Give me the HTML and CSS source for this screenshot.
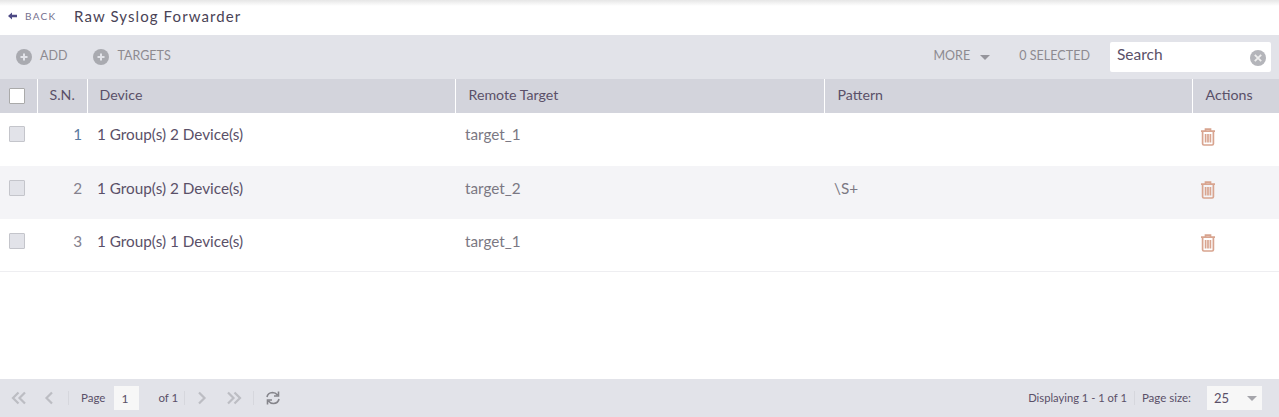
FILE: index.html

```html
<!DOCTYPE html>
<html lang="en">
<head>
  <meta charset="UTF-8">
  <title>Raw Syslog Forwarder</title>
  <link rel="stylesheet" href="styles.css">
</head>
<body>

  <svg class="defs" width="0" height="0">
    <symbol id="plus" viewBox="0 0 16 16">
      <circle cx="8" cy="8" r="8" fill="#a9aab0"/>
      <path d="M8 4.5v7M4.5 8h7" stroke="#e2e3e9" stroke-width="2"/>
    </symbol>
    <symbol id="trash" viewBox="0 0 16 18">
      <path d="M5.500 3V1.200h5V3M1 3.200h14M2.600 3.500v12.200q0 1.300 1.300 1.300h8.200q1.300 0 1.300-1.300V3.500M5.600 6v8.500M8 6v8.500M10.400 6v8.500" fill="none" stroke="#d8a48f" stroke-width="1.700"/>
    </symbol>
  </svg>

  <div class="page">
    <div class="titlebar">
      <a class="back">
        <svg class="back-arrow" viewBox="0 0 9 8"><path d="M0 4l4-3.500v2.300h5v2.400H4v2.300z"/></svg>
        BACK
      </a>
      <span class="title">Raw Syslog Forwarder</span>
    </div>

    <div class="toolbar">
      <a class="tool tool-add"><svg class="plus"><use href="#plus"/></svg><span class="lbl">ADD</span></a>
      <a class="tool"><svg class="plus"><use href="#plus"/></svg><span class="lbl">TARGETS</span></a>
      <span class="spacer"></span>
      <a class="tool tool-more"><span class="lbl">MORE</span><span class="caret"></span></a>
      <span class="lbl selected">0 SELECTED</span>
      <div class="search">
        <span class="search-text">Search</span>
        <svg class="clear" viewBox="0 0 16 16">
          <circle cx="8" cy="8" r="8" fill="#b4b5ba"/>
          <path d="M4.800 4.800l6.400 6.400M11.200 4.800l-6.400 6.400" stroke="#eee" stroke-width="1.800"/>
        </svg>
      </div>
    </div>

    <table class="grid">
      <colgroup>
        <col class="c-check"><col class="c-sn"><col class="c-device"><col class="c-target"><col class="c-pattern"><col>
      </colgroup>
      <thead>
        <tr>
          <th><span class="box box-head"></span></th>
          <th class="th-sn">S.N.</th>
          <th class="th-device">Device</th>
          <th>Remote Target</th>
          <th>Pattern</th>
          <th>Actions</th>
        </tr>
      </thead>
      <tbody>
        <tr>
          <td><span class="box"></span></td>
          <td class="sn sn-blue">1</td>
          <td class="device">1 Group(s) 2 Device(s)</td>
          <td class="muted">target_1</td>
          <td class="muted"></td>
          <td><svg class="trash"><use href="#trash"/></svg></td>
        </tr>
        <tr class="alt">
          <td><span class="box"></span></td>
          <td class="sn">2</td>
          <td class="device">1 Group(s) 2 Device(s)</td>
          <td class="muted">target_2</td>
          <td class="muted">\S+</td>
          <td><svg class="trash"><use href="#trash"/></svg></td>
        </tr>
        <tr>
          <td><span class="box"></span></td>
          <td class="sn">3</td>
          <td class="device">1 Group(s) 1 Device(s)</td>
          <td class="muted">target_1</td>
          <td class="muted"></td>
          <td><svg class="trash"><use href="#trash"/></svg></td>
        </tr>
      </tbody>
    </table>

    <div class="pager">
      <svg class="pg pg-first" viewBox="0 0 16 14"><path d="M7.500 1.500L2 7l5.500 5.500M14 1.500L8.500 7l5.500 5.500"/></svg>
      <svg class="pg pg-prev" viewBox="0 0 10 14"><path d="M8 1.500L2.500 7 8 12.500"/></svg>
      <span class="sep"></span>
      <span class="pg-text">Page</span>
      <span class="pg-input">1</span>
      <span class="pg-text pg-of">of 1</span>
      <span class="sep"></span>
      <svg class="pg pg-next" viewBox="0 0 10 14"><path d="M2 1.500L7.500 7 2 12.500"/></svg>
      <svg class="pg pg-last" viewBox="0 0 16 14"><path d="M2 1.500L7.500 7 2 12.500M8.500 1.500L14 7l-5.500 5.500"/></svg>
      <span class="sep sep-last"></span>
      <svg class="refresh" viewBox="0 0 16 16"><path d="M2 7q.8-4.300 5.500-4.500 3 0 5 2.500M14 9q-.8 4.300-5.500 4.500-3 0-5-2.500M13.500 1.500V6H9M2.500 14.500V10H7"/></svg>
      <span class="spacer"></span>
      <span class="pg-text pg-info">Displaying 1 - 1 of 1</span>
      <span class="sep sep-right"></span>
      <span class="pg-text">Page size:</span>
      <span class="pg-size">25 <span class="caret"></span></span>
    </div>
  </div>

</body>
</html>
```

FILE: styles.css

```css
html, body { margin: 0; height: 100%; overflow: hidden; }
body { font-family: Lato, "Noto Sans", sans-serif; color: #5a5068; background: #fff; }
.defs { position: absolute; }
.page { display: flex; flex-direction: column; height: 417px; }
.spacer { flex: 1; }

.titlebar { height: 35px; display: flex; align-items: center; padding: 0 0 3px 8px; box-sizing: border-box; background: linear-gradient(#e6e6e6, #fff 6px); }
.back { font-size: 10px; letter-spacing: 1.300px; color: #74708e; width: 66px; display: flex; align-items: center; }
.back-arrow { width: 9px; height: 8px; margin-right: 8px; fill: #4d4a85; }
.title { font-size: 15px; letter-spacing: 1.100px; color: #4a4356; }

.toolbar { height: 44px; background: #e2e3e9; display: flex; align-items: center; font-size: 12.500px; color: #8d8a90; padding-left: 16px; padding-right: 8px; }
.tool { display: flex; align-items: center; }
.lbl { margin-bottom: 4px; }
.tool-add { margin-right: 26px; }
.plus { width: 16px; height: 16px; margin-right: 8px; }
.tool-more { margin-right: 29px; }
.caret { display: inline-block; width: 0; height: 0; border: 5px solid transparent; border-top: 5px solid #95959c; border-bottom: 0; margin-left: 10px; }
.selected { margin-right: 20px; letter-spacing: 0.050px; }
.search { width: 161px; height: 30px; margin-top: -1px; background: #fff; border-radius: 2px; box-sizing: border-box; padding: 0 5px 0 7px; display: flex; align-items: center; justify-content: space-between; font-size: 15.500px; color: #5a5068; }
.search-text { margin-bottom: 6px; }
.clear { width: 16px; height: 16px; margin-top: 2px; }

.grid { width: 100%; border-collapse: collapse; table-layout: fixed; font-size: 15.300px; }
.c-check { width: 37px; }
.c-sn { width: 50px; }
.c-device { width: 368px; }
.c-target { width: 369px; }
.c-pattern { width: 368px; }
.grid th { height: 34px; padding: 0 0 4px 13px; box-sizing: border-box; background: #d3d4dc; font-weight: 400; font-size: 14.200px; text-align: left; border-left: 1px solid #fff; color: #5a5068; }
.grid th:first-child { border-left: 0; padding: 0 0 0 9px; }
.grid th.th-sn { padding-left: 12px; }
.grid th.th-device { padding-left: 12px; }
.grid td { height: 53px; padding: 0 0 11px 9px; box-sizing: border-box; vertical-align: middle; color: #5a5068; }
.grid .alt td { background: #f4f4f7; padding-bottom: 9px; }
.grid tbody tr:last-child td { border-bottom: 1px solid #eeeef1; height: 52px; padding-bottom: 7px; }
.grid td.device { padding-left: 10px; }
.grid td.sn { text-align: right; padding-right: 5px; padding-left: 0; color: #85818d; }
.grid td.sn-blue { color: #5a7aa0; }
.grid td.muted { padding-left: 10px; color: #7b7883; }
.grid td:last-child { padding-left: 8px; }
.box { display: block; width: 14px; height: 14px; background: #e2e3e9; border: 1px solid #c4c5cb; border-radius: 1px; }
.box-head { background: #fff; border-color: #aaa; }
.trash { width: 16px; height: 18px; display: block; margin-top: 6px; }
.alt .trash, tr:last-child .trash { margin-top: 4px; }

.pager { margin-top: auto; height: 38px; background: #e2e3e9; display: flex; align-items: center; padding: 0 17px 0 11px; font-size: 11.500px; color: #5a5068; }
.pg-text { margin-bottom: 2px; }
.pg-info { font-size: 11.200px; }
.pg { fill: none; stroke: #bcbdc3; stroke-width: 2.200; height: 14px; }
.pg-first { width: 16px; margin-right: 17px; }
.pg-prev { width: 10px; margin-right: 14px; }
.pg-next { width: 10px; margin-right: 19px; }
.pg-last { width: 16px; margin-right: 11px; }
.sep { width: 1px; height: 14px; background: #d6d7dd; margin-right: 12px; }
.sep-last { margin-right: 11px; }
.sep-right { margin: 0 7px; }
.pg-input { width: 25px; height: 24px; background: #f7f7f7; margin: 0 0 0 9px; padding: 5px 0 0 7px; box-sizing: border-box; font-size: 12px; }
.pg-of { margin-left: 19px; margin-right: 6px; }
.refresh { width: 16px; height: 16px; fill: none; stroke: #85858b; stroke-width: 1.600; }
.pg-size { width: 55px; height: 24px; margin-left: 16px; background: #f7f7f7; display: flex; align-items: center; justify-content: space-between; box-sizing: border-box; padding: 0 5px 0 7px; font-size: 13px; }
.pg-size .caret { border-top-color: #a5a5ab; margin: 0; }
```
